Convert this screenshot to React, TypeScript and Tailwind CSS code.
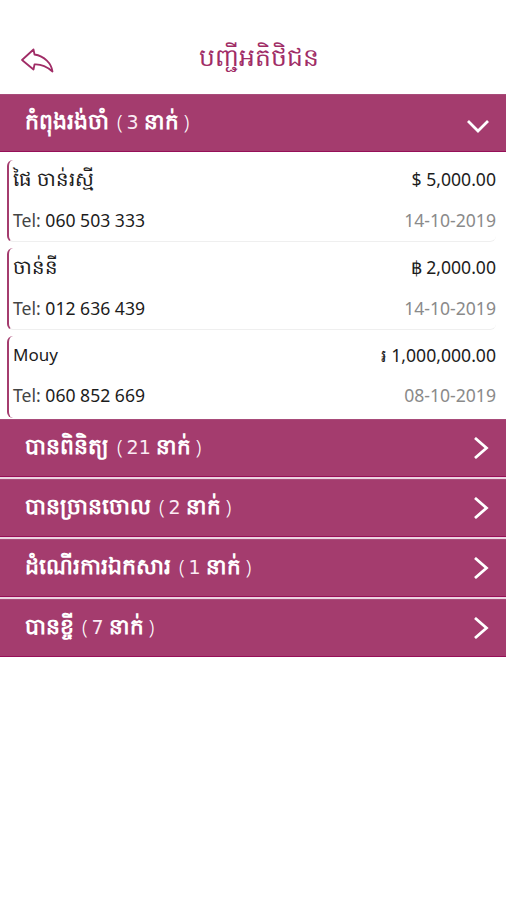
import { ReactNode } from 'react'

const customers = [
  { name: 'ផៃ ចាន់រស្មី', currency: '$', amount: '5,000.00', tel: '060 503 333', date: '14-10-2019' },
  { name: 'ចាន់នី', currency: '฿', amount: '2,000.00', tel: '012 636 439', date: '14-10-2019' },
  { name: 'Mouy', currency: '៛', amount: '1,000,000.00', tel: '060 852 669', date: '08-10-2019' },
]

const groups = [
  { label: 'បានពិនិត្យ', count: 21 },
  { label: 'បានច្រានចោល', count: 2 },
  { label: 'ដំណើរការឯកសារ', count: 1 },
  { label: 'បានខ្ចី', count: 7 },
]

function GroupBar({ label, count, children }: { label: string; count: number; children: ReactNode }) {
  return (
    <button className="flex h-[58px] w-full items-center justify-between border-y border-t-[#a84c7a] border-b-[#960f58] bg-[#a43c6e] pr-[17px] pl-[25px] text-white">
      <span className="flex items-baseline whitespace-nowrap pb-[4px] text-[22px] leading-[30px]">
        <span className="font-bold">{label}</span>
        <span className="ml-[8px] text-[20px] font-light">(</span>
        <span className="ml-[4px] font-['DejaVu_Sans',sans-serif] text-[19px] text-[#fbeaf3]">{count}</span>
        <span className="ml-[5px] text-[21.5px] font-bold">នាក់</span>
        <span className="ml-[5px] text-[20px] font-light">)</span>
      </span>
      {children}
    </button>
  )
}

export default function App() {
  return (
    <div className="min-h-[900px] w-[506px] bg-white font-['Noto_Sans',sans-serif] text-[#1c1c1c]">
      <header className="flex h-[94px] items-center px-5 pt-[24px]">
        <svg className="mt-[3px]" width="36" height="26" viewBox="0 0 36 26" fill="none" stroke="#a02c66" strokeWidth="1.8" strokeLinejoin="round">
          <path d="M13.500 1.500 2 12 13.500 21.500 14.500 16.500C21 16 26 18 32.500 23.500 31.500 15.500 24.500 8 14.500 6.500Z" />
        </svg>
        <h1 className="flex-1 pr-[24px] pb-[5px] text-center text-[25px] font-medium text-[#a02c66]">បញ្ជីអតិថិជន</h1>
      </header>

      <GroupBar label="កំពុងរង់ចាំ" count={3}>
        <svg className="mt-[6px]" width="22" height="15" viewBox="0 0 22 15" fill="none" stroke="white" strokeWidth="2.8">
          <path d="m1 2 10 10L21 2" />
        </svg>
      </GroupBar>

      <div className="flex flex-col gap-[6px] pt-[8px] pr-[10px] pb-px pl-[7px]">
        {customers.map((c, i) => (
          <div
            key={c.tel}
            className={`flex h-[82px] flex-col justify-between rounded-md border-l-2 border-l-[#a43c6e] pt-[6px] pl-[4px] text-[17.600px] leading-[26px] ${i < customers.length - 1 ? 'border-b border-b-[#efefef] pb-[8px]' : 'pb-[10px]'}`}
          >
            <div className="flex items-center justify-between">
              <span className={c.name === 'Mouy' ? 'text-[17px]' : 'text-[19.700px]'}>{c.name}</span>
              <span>{c.currency} {c.amount}</span>
            </div>
            <div className="flex items-center justify-between">
              <span><span className="text-[#444]">Tel:</span> {c.tel}</span>
              <span className="text-[#8a8a8a]">{c.date}</span>
            </div>
          </div>
        ))}
      </div>

      <div className="flex flex-col gap-[2px] bg-[#ecd3e0]">
        {groups.map((g) => (
          <GroupBar key={g.label} label={g.label} count={g.count}>
            <svg width="16" height="22" viewBox="0 0 16 22" fill="none" stroke="white" strokeWidth="2.8">
              <path d="m2 1 11.500 10L2 21" />
            </svg>
          </GroupBar>
        ))}
      </div>
    </div>
  )
}
